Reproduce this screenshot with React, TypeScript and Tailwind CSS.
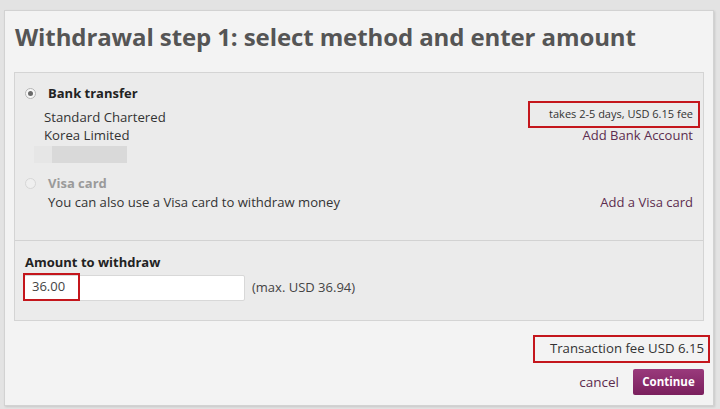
import React from "react";

function Radio({ checked, disabled }: { checked?: boolean; disabled?: boolean }) {
  return (
    <span
      className={
        "inline-flex h-[11px] w-[11px] shrink-0 items-center justify-center rounded-full border " +
        (disabled ? "border-[#d6d6d6] bg-[#efefef]" : "border-[#b5b5b5] bg-[#f7f7f7]")
      }
    >
      {checked && <span className="h-[5px] w-[5px] rounded-full bg-[#6a6a6a]" />}
    </span>
  );
}

export default function App() {
  return (
    <div
      className="h-[409px] w-[720px] overflow-hidden bg-[#e3e3e3] pl-[4px] pt-[10px] text-[#333]"
      style={{ fontFamily: '"Open Sans", "Noto Sans", sans-serif' }}
    >
      <div className="h-[396px] w-[710px] border border-[#d2d2d2] bg-[#f3f3f3] px-[9px] shadow-[1px_1px_2px_rgba(0,0,0,0.12)]">
        <h1 className="pt-[10px] pl-[1px] text-[24px] font-bold leading-[32px] tracking-[-0.1px] text-[#555]">
          Withdrawal step 1: select method and enter amount
        </h1>
        <div className="mt-[19px] border border-[#d4d4d4] bg-[#ebebeb]">
          {/* methods */}
          <div className="h-[167px] pl-[10px] pr-[10px] pt-[10px]">
            <div className="flex items-center gap-[12px]">
              <Radio checked />
              <span className="text-[13px] font-bold leading-[20px] text-[#222]">Bank transfer</span>
            </div>
            <div className="flex justify-between">
              <div className="pl-[19px] pt-[5px] text-[13.2px] leading-[18px] text-[#333]">
                <div>Standard Chartered</div>
                <div>Korea Limited</div>
                <div className="-ml-[10px] mt-[2px] flex h-[17px]">
                  <div className="w-[18px] bg-[#e6e6e6]" />
                  <div className="w-[75px] bg-[#d9d9d9]" />
                </div>
              </div>
              <div className="flex flex-col items-end">
                <div className="-mr-[7px] -mt-[2px] flex h-[27px] w-[172px] items-center justify-end border-2 border-[#c4161c] pr-[5px] text-[11px] text-[#333]">
                  takes 2-5 days, USD 6.15 fee
                </div>
                <div className="-mt-[2px] text-[13px] leading-[18px] text-[#5c2c4e]">Add Bank Account</div>
              </div>
            </div>
            <div className="mt-[10px] flex items-center gap-[12px]">
              <Radio disabled />
              <span className="text-[13px] font-bold leading-[20px] text-[#9a9a9a]">Visa card</span>
            </div>
            <div className="flex justify-between text-[13px] leading-[18px]">
              <span className="pl-[23px] text-[13.1px] text-[#333]">You can also use a Visa card to withdraw money</span>
              <span className="text-[#5c2c4e]">Add a Visa card</span>
            </div>
          </div>
          {/* amount */}
          <div className="h-[80px] border-t border-[#d2d2d2] pl-[10px] pt-[11px]">
            <div className="text-[13px] font-bold leading-[20px] text-[#222]">Amount to withdraw</div>
            <div className="mt-[3px] flex items-center">
              <div className="relative ml-[-1px] h-[26px] w-[221px] rounded-[2px] border border-[#d8d8d8] bg-white">
                <div className="absolute -left-[2px] -top-[3px] flex h-[28px] w-[57px] items-center border-2 border-[#c4161c] pl-[7px] text-[13px] text-[#444]">
                  36.00
                </div>
              </div>
              <span className="ml-[7px] text-[13px] text-[#444]">(max. USD 36.94)</span>
            </div>
          </div>
        </div>
        {/* footer */}
        <div className="flex flex-col items-end">
          <div className="mr-[-6px] mt-[14px] flex h-[28px] w-[177px] items-center justify-end border-2 border-[#c4161c] pr-[4px] text-[13.2px] text-[#333]">
            Transaction fee USD 6.15
          </div>
          <div className="mt-[6px] flex items-center">
            <span className="text-[13.5px] text-[#5c2c4e]">cancel</span>
            <button className="ml-[14px] h-[26px] w-[71px] rounded-[2px] bg-gradient-to-b from-[#9a3a7c] to-[#7a1f5d] text-[11.5px] font-bold text-white">
              Continue
            </button>
          </div>
        </div>
      </div>
    </div>
  );
}
